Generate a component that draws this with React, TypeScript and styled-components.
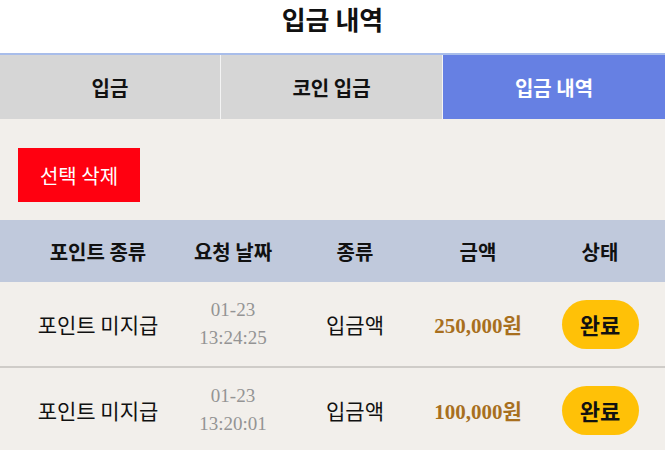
import React from "react";
import styled, { createGlobalStyle } from "styled-components";

const GlobalStyle = createGlobalStyle`
  html, body {
    margin: 0;
    padding: 0;
    background: #f2efeb;
  }
  body {
    font-family: "Noto Sans CJK KR", "Noto Sans", sans-serif;
    color: #111;
  }
`;

const Page = styled.div`
  width: 665px;
  min-height: 450px;
  background: #f2efeb;
`;

const TitleBar = styled.header`
  height: 53px;
  background: #fff;
  display: flex;
  justify-content: center;
  align-items: flex-start;
  font-size: 26px;
  font-weight: 700;
  line-height: 38px;
`;

const Tabs = styled.nav`
  display: grid;
  grid-template-columns: 220px 221px 1fr;
  gap: 1px;
  background: #f4f4f4;
  border-top: 2px solid #a8bdea;
  height: 64px;
`;

const Tab = styled.div<{ $active?: boolean }>`
  display: flex;
  align-items: center;
  justify-content: center;
  background: ${(p) => (p.$active ? "#6680e3" : "#d6d6d6")};
  color: ${(p) => (p.$active ? "#fff" : "#111")};
  font-size: 20px;
  font-weight: 700;
`;

const Toolbar = styled.div`
  padding: 29px 18px 18px;
`;

const DeleteButton = styled.button`
  display: block;
  width: 122px;
  height: 54px;
  border: none;
  background: #ff0010;
  color: #fff;
  font-family: inherit;
  font-size: 20px;
  cursor: pointer;
`;

const Row = styled.div<{ $head?: boolean }>`
  display: grid;
  grid-template-columns: 31px 134px 136px 108px 138px 106px 12px;
  align-items: center;
  height: ${(p) => (p.$head ? "62px" : "84px")};
  background: ${(p) => (p.$head ? "#c0c9dc" : "transparent")};
  border-bottom: ${(p) => (p.$head ? "none" : "2px solid #cfccc8")};
  font-size: ${(p) => (p.$head ? "20px" : "21px")};
  font-weight: ${(p) => (p.$head ? 700 : 400)};
  white-space: nowrap;
  & > div {
    text-align: center;
  }
`;

const DateCell = styled.div`
  font-family: "Liberation Serif", serif;
  color: #949494;
  font-size: 19px;
  line-height: 28px;
`;

const Amount = styled.div`
  font-family: "Liberation Serif", "Noto Sans CJK KR", serif;
  font-weight: 700;
  color: #a86f1e;
  font-size: 21px;
`;

const Badge = styled.span`
  display: inline-flex;
  align-items: center;
  justify-content: center;
  width: 77px;
  height: 49px;
  border-radius: 25px;
  background: #ffc107;
  font-size: 22px;
  font-weight: 700;
`;

const rows = [
  { kind: "포인트 미지급", date: "01-23", time: "13:24:25", type: "입금액", amount: "250,000원" },
  { kind: "포인트 미지급", date: "01-23", time: "13:20:01", type: "입금액", amount: "100,000원" },
];

export default function App() {
  return (
    <Page>
      <GlobalStyle />
      <TitleBar>입금 내역</TitleBar>
      <Tabs>
        <Tab>입금</Tab>
        <Tab>코인 입금</Tab>
        <Tab $active>입금 내역</Tab>
      </Tabs>
      <Toolbar>
        <DeleteButton>선택 삭제</DeleteButton>
      </Toolbar>
      <Row $head>
        <div />
        <div>포인트 종류</div>
        <div>요청 날짜</div>
        <div>종류</div>
        <div>금액</div>
        <div>상태</div>
        <div />
      </Row>
      {rows.map((r, i) => (
        <Row key={i}>
          <div />
          <div>{r.kind}</div>
          <DateCell>
            {r.date}
            <br />
            {r.time}
          </DateCell>
          <div>{r.type}</div>
          <Amount>{r.amount}</Amount>
          <div>
            <Badge>완료</Badge>
          </div>
          <div />
        </Row>
      ))}
    </Page>
  );
}
